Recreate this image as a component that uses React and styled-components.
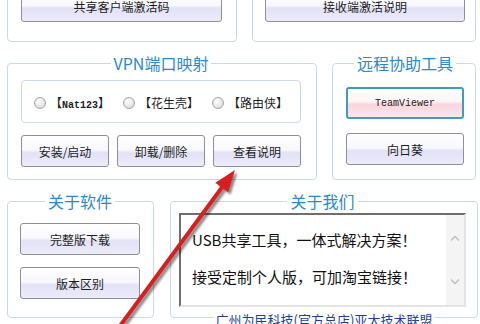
import React from "react";
import styled, { createGlobalStyle, css } from "styled-components";

const GlobalStyle = createGlobalStyle`
  html, body {
    margin: 0;
    padding: 0;
    background: #ffffff;
  }
  body {
    width: 480px;
    height: 324px;
    overflow: hidden;
    font-family: "Noto Sans CJK SC", "Liberation Sans", sans-serif;
    color: #1a1a1a;
  }
`;

const Page = styled.div`
  position: relative;
  width: 480px;
  height: 324px;
  overflow: hidden;
`;

const Sheet = styled.div`
  display: flex;
  flex-direction: column;
  gap: 12px;
  margin-top: -24px;
  padding: 0 4px 0 7px;
`;

const Row = styled.div`
  display: grid;
  grid-template-columns: ${(p) => p.$cols};
  column-gap: ${(p) => p.$gap || 15}px;
  margin-right: ${(p) => p.$mr || 0}px;
`;

const Group = styled.fieldset`
  position: relative;
  margin: 0;
  min-width: 0;
  border: 1px solid #c9dae7;
  border-radius: 4px;
  padding: ${(p) => p.$pad};
`;

const Legend = styled.legend`
  margin: 0 auto;
  padding: 0 3px;
  font-size: 16px;
  line-height: 18px;
  color: #2d88cc;
`;

const Stack = styled.div`
  display: flex;
  flex-direction: column;
  gap: ${(p) => p.$gap}px;
`;

const Btn = styled.button`
  display: block;
  width: 100%;
  height: ${(p) => p.$h || 32}px;
  padding: 0;
  border: 1px solid #8c90a6;
  border-radius: 3px;
  background: linear-gradient(
    to bottom,
    #ffffff 0%,
    #f8f8fd 46%,
    #e2e2f6 56%,
    #ebebf9 100%
  );
  font-family: "Noto Sans CJK SC", sans-serif;
  font-size: 12px;
  color: #1c1c1c;
  ${(p) =>
    p.$accent &&
    css`
      border: 2px solid #3e9fb3;
      background: linear-gradient(
        to bottom,
        #ffffff 0%,
        #fdf5f7 44%,
        #f8d5dd 56%,
        #fbe7eb 100%
      );
      font-family: "Liberation Mono", monospace;
      font-size: 10px;
    `}
`;

const ButtonRow = styled.div`
  display: grid;
  grid-template-columns: repeat(3, 88px);
  justify-content: space-between;
`;

const RadioBox = styled.div`
  height: 43px;
  box-sizing: border-box;
  border: 1px solid #c9dae7;
  border-radius: 4px;
  display: flex;
  align-items: center;
  padding: 2px 0 0 12px;
  gap: 13px;
`;

const RadioItem = styled.label`
  display: flex;
  align-items: center;
  gap: 4px;
  font-size: 12px;
  color: #1f1f1f;
`;

const Dot = styled.span`
  width: 12px;
  height: 12px;
  box-sizing: border-box;
  border-radius: 50%;
  border: 1px solid #a6a6a6;
  background: radial-gradient(circle at 40% 35%, #ffffff 0%, #e6e6e6 55%, #cfcfcf 100%);
`;

const Mono = styled.span`
  font-family: "Liberation Mono", monospace;
  font-size: 10px;
  font-weight: bold;
`;

const Memo = styled.div`
  height: 94px;
  box-sizing: border-box;
  display: flex;
  background: #ffffff;
  border: 2px solid;
  border-color: #6f6f6f #e4e4e4 #e4e4e4 #6f6f6f;
`;

const MemoText = styled.div`
  flex: 1;
  padding: 15px 0 0 11px;
  font-size: 15px;
  line-height: 20px;
  color: #111111;

  p {
    margin: 0;
  }
  p + p {
    margin-top: 17px;
  }
`;

const ScrollBar = styled.div`
  width: 18px;
  background: #f4f4f4;
  display: flex;
  flex-direction: column;
  justify-content: space-between;
  align-items: center;
  padding: 20px 0;
`;

const Footer = styled.div`
  position: absolute;
  left: 50%;
  bottom: -11px;
  transform: translateX(-50%);
  padding: 0 2px;
  background: #ffffff;
  white-space: nowrap;
  font-size: 13px;
  line-height: 16px;
  color: #1f3f9f;
`;

const Overlay = styled.svg`
  position: absolute;
  left: 0;
  top: 0;
  pointer-events: none;
`;

function Chevron({ down }) {
  return (
    <svg width="10" height="7" viewBox="0 0 10 7">
      <path
        d={down ? "M1 1.5 L5 5.5 L9 1.5" : "M1 5.5 L5 1.5 L9 5.5"}
        fill="none"
        stroke="#bdbdbd"
        strokeWidth="1.4"
      />
    </svg>
  );
}

function Arrow() {
  const head = "235,170 228.1,192.3 215.3,182.7";
  return (
    <Overlay width="480" height="324" viewBox="0 0 480 324">
      <defs>
        <filter id="blur" x="-20%" y="-20%" width="140%" height="140%">
          <feGaussianBlur stdDeviation="1.2" />
        </filter>
      </defs>
      <g transform="translate(2.5 2.5)" filter="url(#blur)" opacity="0.45">
        <line x1="117" y1="330" x2="223" y2="186" stroke="#000" strokeWidth="4" />
        <polygon points={head} fill="#000" />
      </g>
      <line x1="117" y1="330" x2="223" y2="186" stroke="#d81f1f" strokeWidth="4" />
      <polygon points={head} fill="#d81f1f" />
    </Overlay>
  );
}

const vpnTools = [
  { key: "nat", label: <>【<Mono>Nat123</Mono>】</> },
  { key: "hsk", label: "【花生壳】" },
  { key: "lyx", label: "【路由侠】" },
];

export default function App() {
  return (
    <Page>
      <GlobalStyle />
      <Sheet>
        <Row $cols="230px 1fr">
          <Group $pad="14px 14px 19px 13px">
            <Btn $h={31}>共享客户端激活码</Btn>
          </Group>
          <Group $pad="14px 10px 19px 12px">
            <Btn $h={31}>接收端激活说明</Btn>
          </Group>
        </Row>

        <Row $cols="310px 1fr">
          <Group $pad="8px 15px 12px 13px">
            <Legend>VPN端口映射</Legend>
            <Stack $gap={12}>
              <RadioBox>
                {vpnTools.map((t) => (
                  <RadioItem key={t.key}>
                    <Dot />
                    <span>{t.label}</span>
                  </RadioItem>
                ))}
              </RadioBox>
              <ButtonRow>
                <Btn>安装/启动</Btn>
                <Btn>卸载/删除</Btn>
                <Btn>查看说明</Btn>
              </ButtonRow>
            </Stack>
          </Group>
          <Group $pad="15px 11px 14px 13px">
            <Legend>远程协助工具</Legend>
            <Stack $gap={14}>
              <Btn $accent>TeamViewer</Btn>
              <Btn>向日葵</Btn>
            </Stack>
          </Group>
        </Row>

        <Row $cols="147px 1fr" $gap={16} $mr={-2}>
          <Group $pad="13px 13px 18px 12px">
            <Legend>关于软件</Legend>
            <Stack $gap={12}>
              <Btn>完整版下载</Btn>
              <Btn>版本区别</Btn>
            </Stack>
          </Group>
          <Group $pad="3px 11px 10px 8px">
            <Legend>关于我们</Legend>
            <Memo>
              <MemoText>
                <p>USB共享工具，一体式解决方案！</p>
                <p>接受定制个人版，可加淘宝链接！</p>
              </MemoText>
              <ScrollBar>
                <Chevron />
                <Chevron down />
              </ScrollBar>
            </Memo>
            <Footer>广州为民科技(官方总店)亚太技术联盟</Footer>
          </Group>
        </Row>
      </Sheet>
      <Arrow />
    </Page>
  );
}
